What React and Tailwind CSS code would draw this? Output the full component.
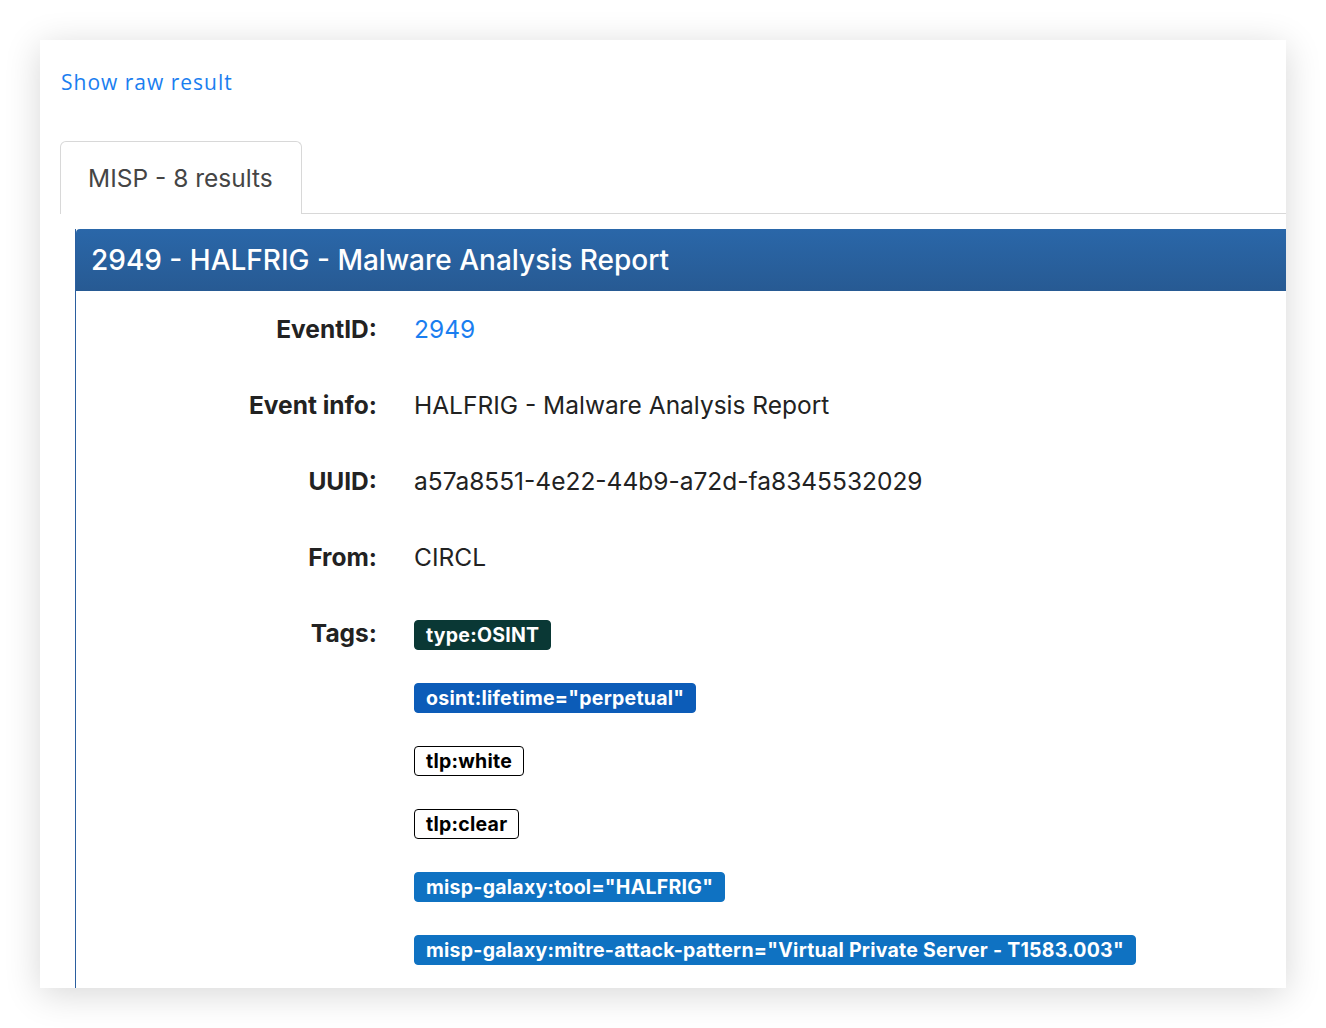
import React from "react";

const rows = [
  { label: "EventID:", value: "2949", link: true },
  { label: "Event info:", value: "HALFRIG - Malware Analysis Report" },
  { label: "UUID:", value: "a57a8551-4e22-44b9-a72d-fa8345532029" },
  { label: "From:", value: "CIRCL" },
];

const tags = [
  { text: "type:OSINT", cls: "bg-[#0a3835] text-white border-[#0a3835]" },
  { text: 'osint:lifetime="perpetual"', cls: "bg-[#0c5cb8] text-white border-[#0c5cb8]" },
  { text: "tlp:white", cls: "bg-white text-black border-black" },
  { text: "tlp:clear", cls: "bg-white text-black border-black" },
  { text: 'misp-galaxy:tool="HALFRIG"', cls: "bg-[#0f72c2] text-white border-[#0f72c2]" },
  { text: 'misp-galaxy:mitre-attack-pattern="Virtual Private Server - T1583.003"', cls: "bg-[#0f72c2] text-white border-[#0f72c2]" },
];

export default function App() {
  return (
    <div className="w-[1326px] h-[1028px] bg-white p-[40px] overflow-hidden font-['Inter',sans-serif]">
      <div className="w-[1246px] h-[948px] bg-white overflow-hidden shadow-[0_6px_34px_rgba(0,0,0,0.16)] pl-[20px] pt-[27px]">
        <div className="h-[30px] leading-[30px] pl-[1px]">
          <span className="text-[21px] text-[#1a7ef0] font-['Open_Sans',sans-serif] tracking-[1px]">Show raw result</span>
        </div>
        <div className="mt-[44px] flex border-b border-[#d8d8d8]">
          <div className="w-[242px] h-[73px] -mb-px bg-white border border-b-0 border-[#d8d8d8] rounded-t-[6px] pl-[27px] flex items-center text-[24.5px] text-[#454545]">
            MISP - 8 results
          </div>
        </div>
        <div className="ml-[15px] mt-[15px] border-l border-[#2b5f9f]">
          <div className="h-[62px] rounded-tl-[4px] bg-gradient-to-b from-[#2a67a9] to-[#275a93] flex items-center pl-[15px] text-white text-[28px] font-medium">
            2949 - HALFRIG - Malware Analysis Report
          </div>
          <div className="flex flex-col">
            {rows.map((r) => (
              <div key={r.label} className="flex py-[23px] leading-[30px]">
                <div className="w-[301px] text-right font-bold text-[24.5px] text-[#222]">{r.label}</div>
                <div className={"ml-[37px] text-[24.5px] " + (r.link ? "text-[#1a7ef0]" : "text-[#222]")}>{r.value}</div>
              </div>
            ))}
            <div className="flex py-[23px] leading-[30px]">
              <div className="w-[301px] text-right font-bold text-[24.5px] text-[#222]">Tags:</div>
              <div className="ml-[37px] flex flex-col items-start gap-[33px] pt-[2px]">
                {tags.map((t) => (
                  <span key={t.text} className={"h-[30px] px-[11px] border rounded-[4px] text-[19.5px] tracking-[0.25px] font-bold leading-[28px] whitespace-nowrap " + t.cls}>
                    {t.text}
                  </span>
                ))}
              </div>
            </div>
          </div>
        </div>
      </div>
    </div>
  );
}
